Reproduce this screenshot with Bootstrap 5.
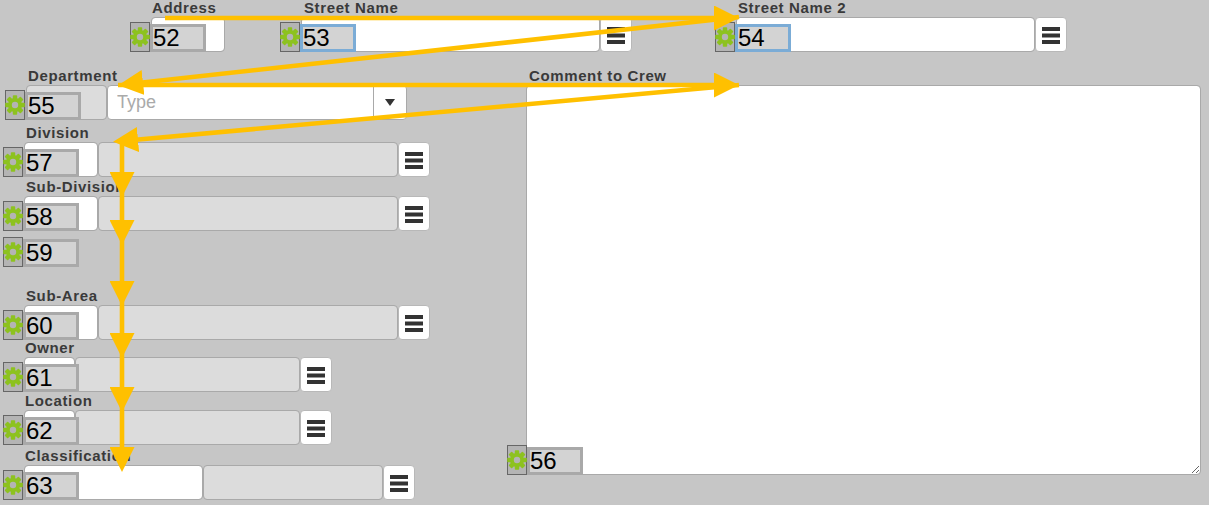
<!DOCTYPE html>
<html lang="en">
<head>
    <meta charset="UTF-8">
    <meta name="viewport" content="width=device-width, initial-scale=1.0">
    <title>Form Tab Order</title>
    <link href="https://cdn.jsdelivr.net/npm/bootstrap@5.3.0/dist/css/bootstrap.min.css" rel="stylesheet">
    <style>
        body {
            background-color: #c6c6c6;
            font-family: "Liberation Sans", Arial, sans-serif;
            overflow: hidden;
        }

        .canvas-area {
            width: 1209px;
            height: 505px;
        }

        .fld {
            position: absolute;
        }

        /* free canvas: each field sits where the form designer dropped it */
        #f52 { left: 150px; top: -1px; }
        #f53 { left: 300px; top: -1px; }
        #f54 { left: 735px; top: -1px; }
        #f55 { left: 25px; top: 67px; }
        #f57 { left: 23px; top: 124px; }
        #f58 { left: 23px; top: 178px; }
        #f59 { left: 23px; top: 237px; height: 30px; }
        #f60 { left: 23px; top: 287px; }
        #f61 { left: 23px; top: 339px; }
        #f62 { left: 23px; top: 392px; }
        #f63 { left: 23px; top: 447px; }
        #f56 { left: 527px; top: 67px; }

        .fld-label {
            display: block;
            height: 18px;
            margin: 0 0 0 3px;
            font-size: 15px;
            font-weight: 700;
            letter-spacing: .62px;
            line-height: 18px;
            color: #3a3a3a;
            white-space: nowrap;
        }

        #f52 .fld-label, #f56 .fld-label, #f61 .fld-label, #f62 .fld-label, #f63 .fld-label {
            margin-left: 2px;
        }

        #f53 .fld-label {
            margin-left: 4px;
        }

        .fld-row {
            padding-left: 1px;
            height: 35px;
        }

        .fld-input.form-control {
            height: 35px;
            min-height: 0;
            padding: 0 8px;
            border: 1px solid #a9a9a9;
            border-radius: 4px;
            background-color: #fff;
            font-size: 18px;
            flex: none;
        }

        .fld-input.form-control.is-gray {
            background-color: #dcdcdc;
        }

        .w-addr { width: 74px !important; }
        .w-street { width: 299px !important; }
        .w-code { width: 74px !important; }
        .w-code-sm { width: 51px !important; }
        .w-code-lg { width: 179px !important; }
        .w-dept { width: 81px !important; }
        .w-desc { width: 300px !important; }
        .w-desc-sm { width: 225px !important; }
        .w-desc-md { width: 180px !important; }

        .list-btn.btn {
            width: 32px;
            height: 35px;
            padding: 2px 0 0;
            background-color: #fff;
            border: 1px solid #b8b8b8;
            border-radius: 4px;
            display: flex;
            align-items: center;
            justify-content: center;
        }

        .type-box {
            width: 300px;
            height: 35px;
            background-color: #fff;
            border: 1px solid #a9a9a9;
            border-radius: 4px;
        }

        .type-box input {
            flex: 1;
            min-width: 0;
            border: 0;
            outline: 0;
            padding: 0 9px;
            font-size: 18px;
            background: transparent;
        }

        .type-box input::placeholder {
            color: #aaa;
            opacity: 1;
        }

        .type-caret {
            width: 33px;
            border-left: 1px solid #a9a9a9;
        }

        .type-caret::after {
            content: "";
            border-left: 5px solid transparent;
            border-right: 5px solid transparent;
            border-top: 7px solid #333;
        }

        .order-tag {
            position: absolute;
            left: -20px;
            bottom: 0;
            align-items: flex-end;
        }

        .gear-box {
            width: 20px;
            height: 30px;
            background-color: #b4b4b4;
            border: 1px solid #666;
        }

        .gear-box svg {
            margin-left: -1px;
            flex: none;
        }

        .order-num {
            width: 56px;
            height: 28px;
            background-color: #d3d3d3;
            border: 3px solid #a9a9a9;
            font-size: 24px;
            line-height: 21px;
            color: #000;
        }

        .order-num.is-active {
            border-color: #7bacd6;
        }

        .comment-box.form-control {
            width: 675px;
            height: 390px;
            margin: 0 0 0 -1px;
            border: 1px solid #a9a9a9;
            border-radius: 4px;
        }

        .order-lines {
            position: absolute;
            left: 0;
            top: 0;
            pointer-events: none;
        }

        .order-lines line {
            stroke: #ffc000;
            stroke-width: 4.6;
        }
    </style>
</head>
<body>
<svg width="0" height="0" class="d-block">
    <defs>
        <symbol id="gear" viewBox="0 0 20 20">
            <g fill="#8dc21f">
                <rect x="7.8" y="0.2" width="4.4" height="19.6" rx=".8"/>
                <rect x="7.8" y="0.2" width="4.4" height="19.6" rx=".8" transform="rotate(45 10 10)"/>
                <rect x="7.8" y="0.2" width="4.4" height="19.6" rx=".8" transform="rotate(90 10 10)"/>
                <rect x="7.8" y="0.2" width="4.4" height="19.6" rx=".8" transform="rotate(135 10 10)"/>
            </g>
            <circle cx="10" cy="10" r="7" fill="#8dc21f"/>
            <circle cx="10" cy="10" r="3.2" fill="#b4b4b4"/>
        </symbol>
        <symbol id="bars" viewBox="0 0 18 17">
            <rect width="18" height="4" fill="#333"/>
            <rect y="6.5" width="18" height="4" fill="#333"/>
            <rect y="13" width="18" height="4" fill="#333"/>
        </symbol>
        <marker id="arrowHead" markerUnits="userSpaceOnUse" markerWidth="25" markerHeight="25" refX="5" refY="12.5" orient="auto">
            <polygon points="0,0 25,12.5 0,25" fill="#ffc000"/>
        </marker>
    </defs>
</svg>

<div class="canvas-area position-relative">

    <div class="fld" id="f52">
        <label class="fld-label">Address</label>
        <div class="fld-row d-flex">
            <input type="text" class="fld-input form-control w-addr">
        </div>
        <div class="order-tag d-flex">
            <span class="gear-box d-flex align-items-center"><svg width="20" height="20"><use href="#gear"/></svg></span>
            <span class="order-num">52</span>
        </div>
    </div>

    <div class="fld" id="f53">
        <label class="fld-label">Street Name</label>
        <div class="fld-row d-flex">
            <input type="text" class="fld-input form-control w-street">
            <button type="button" class="list-btn btn"><svg width="18" height="17"><use href="#bars"/></svg></button>
        </div>
        <div class="order-tag d-flex">
            <span class="gear-box d-flex align-items-center"><svg width="20" height="20"><use href="#gear"/></svg></span>
            <span class="order-num is-active">53</span>
        </div>
    </div>

    <div class="fld" id="f54">
        <label class="fld-label">Street Name 2</label>
        <div class="fld-row d-flex">
            <input type="text" class="fld-input form-control w-street">
            <button type="button" class="list-btn btn"><svg width="18" height="17"><use href="#bars"/></svg></button>
        </div>
        <div class="order-tag d-flex">
            <span class="gear-box d-flex align-items-center"><svg width="20" height="20"><use href="#gear"/></svg></span>
            <span class="order-num is-active">54</span>
        </div>
    </div>

    <div class="fld" id="f55">
        <label class="fld-label">Department</label>
        <div class="fld-row d-flex">
            <input type="text" class="fld-input form-control is-gray w-dept">
            <div class="type-box d-flex">
                <input type="text" placeholder="Type">
                <span class="type-caret d-flex align-items-center justify-content-center"></span>
            </div>
        </div>
        <div class="order-tag d-flex">
            <span class="gear-box d-flex align-items-center"><svg width="20" height="20"><use href="#gear"/></svg></span>
            <span class="order-num">55</span>
        </div>
    </div>

    <div class="fld" id="f57">
        <label class="fld-label">Division</label>
        <div class="fld-row d-flex">
            <input type="text" class="fld-input form-control w-code">
            <input type="text" class="fld-input form-control is-gray w-desc">
            <button type="button" class="list-btn btn"><svg width="18" height="17"><use href="#bars"/></svg></button>
        </div>
        <div class="order-tag d-flex">
            <span class="gear-box d-flex align-items-center"><svg width="20" height="20"><use href="#gear"/></svg></span>
            <span class="order-num">57</span>
        </div>
    </div>

    <div class="fld" id="f58">
        <label class="fld-label">Sub-Division</label>
        <div class="fld-row d-flex">
            <input type="text" class="fld-input form-control w-code">
            <input type="text" class="fld-input form-control is-gray w-desc">
            <button type="button" class="list-btn btn"><svg width="18" height="17"><use href="#bars"/></svg></button>
        </div>
        <div class="order-tag d-flex">
            <span class="gear-box d-flex align-items-center"><svg width="20" height="20"><use href="#gear"/></svg></span>
            <span class="order-num">58</span>
        </div>
    </div>

    <div class="fld" id="f59">
        <div class="order-tag d-flex">
            <span class="gear-box d-flex align-items-center"><svg width="20" height="20"><use href="#gear"/></svg></span>
            <span class="order-num">59</span>
        </div>
    </div>

    <div class="fld" id="f60">
        <label class="fld-label">Sub-Area</label>
        <div class="fld-row d-flex">
            <input type="text" class="fld-input form-control w-code">
            <input type="text" class="fld-input form-control is-gray w-desc">
            <button type="button" class="list-btn btn"><svg width="18" height="17"><use href="#bars"/></svg></button>
        </div>
        <div class="order-tag d-flex">
            <span class="gear-box d-flex align-items-center"><svg width="20" height="20"><use href="#gear"/></svg></span>
            <span class="order-num">60</span>
        </div>
    </div>

    <div class="fld" id="f61">
        <label class="fld-label">Owner</label>
        <div class="fld-row d-flex">
            <input type="text" class="fld-input form-control w-code-sm">
            <input type="text" class="fld-input form-control is-gray w-desc-sm">
            <button type="button" class="list-btn btn"><svg width="18" height="17"><use href="#bars"/></svg></button>
        </div>
        <div class="order-tag d-flex">
            <span class="gear-box d-flex align-items-center"><svg width="20" height="20"><use href="#gear"/></svg></span>
            <span class="order-num">61</span>
        </div>
    </div>

    <div class="fld" id="f62">
        <label class="fld-label">Location</label>
        <div class="fld-row d-flex">
            <input type="text" class="fld-input form-control w-code-sm">
            <input type="text" class="fld-input form-control is-gray w-desc-sm">
            <button type="button" class="list-btn btn"><svg width="18" height="17"><use href="#bars"/></svg></button>
        </div>
        <div class="order-tag d-flex">
            <span class="gear-box d-flex align-items-center"><svg width="20" height="20"><use href="#gear"/></svg></span>
            <span class="order-num">62</span>
        </div>
    </div>

    <div class="fld" id="f63">
        <label class="fld-label">Classification</label>
        <div class="fld-row d-flex">
            <input type="text" class="fld-input form-control w-code-lg">
            <input type="text" class="fld-input form-control is-gray w-desc-md">
            <button type="button" class="list-btn btn"><svg width="18" height="17"><use href="#bars"/></svg></button>
        </div>
        <div class="order-tag d-flex">
            <span class="gear-box d-flex align-items-center"><svg width="20" height="20"><use href="#gear"/></svg></span>
            <span class="order-num">63</span>
        </div>
    </div>

    <div class="fld" id="f56">
        <label class="fld-label">Comment to Crew</label>
        <textarea class="comment-box form-control d-block"></textarea>
        <div class="order-tag d-flex">
            <span class="gear-box d-flex align-items-center"><svg width="20" height="20"><use href="#gear"/></svg></span>
            <span class="order-num">56</span>
        </div>
    </div>

    <!-- tab order arrows, on top of everything -->
    <svg class="order-lines" width="1209" height="505">
        <line x1="165" y1="18" x2="719" y2="18" marker-end="url(#arrowHead)"/>
        <line x1="739" y1="17" x2="138" y2="83" marker-end="url(#arrowHead)"/>
        <line x1="118" y1="85" x2="719" y2="85" marker-end="url(#arrowHead)"/>
        <line x1="739" y1="85" x2="133" y2="140" marker-end="url(#arrowHead)"/>
        <line x1="122" y1="140" x2="122" y2="177" marker-end="url(#arrowHead)"/>
        <line x1="122" y1="190" x2="122" y2="225" marker-end="url(#arrowHead)"/>
        <line x1="122" y1="238" x2="122" y2="286" marker-end="url(#arrowHead)"/>
        <line x1="122" y1="299" x2="122" y2="338" marker-end="url(#arrowHead)"/>
        <line x1="122" y1="351" x2="122" y2="392" marker-end="url(#arrowHead)"/>
        <line x1="122" y1="405" x2="122" y2="452" marker-end="url(#arrowHead)"/>
    </svg>
</div>

<script src="https://cdn.jsdelivr.net/npm/bootstrap@5.3.0/dist/js/bootstrap.bundle.min.js"></script>
</body>
</html>
